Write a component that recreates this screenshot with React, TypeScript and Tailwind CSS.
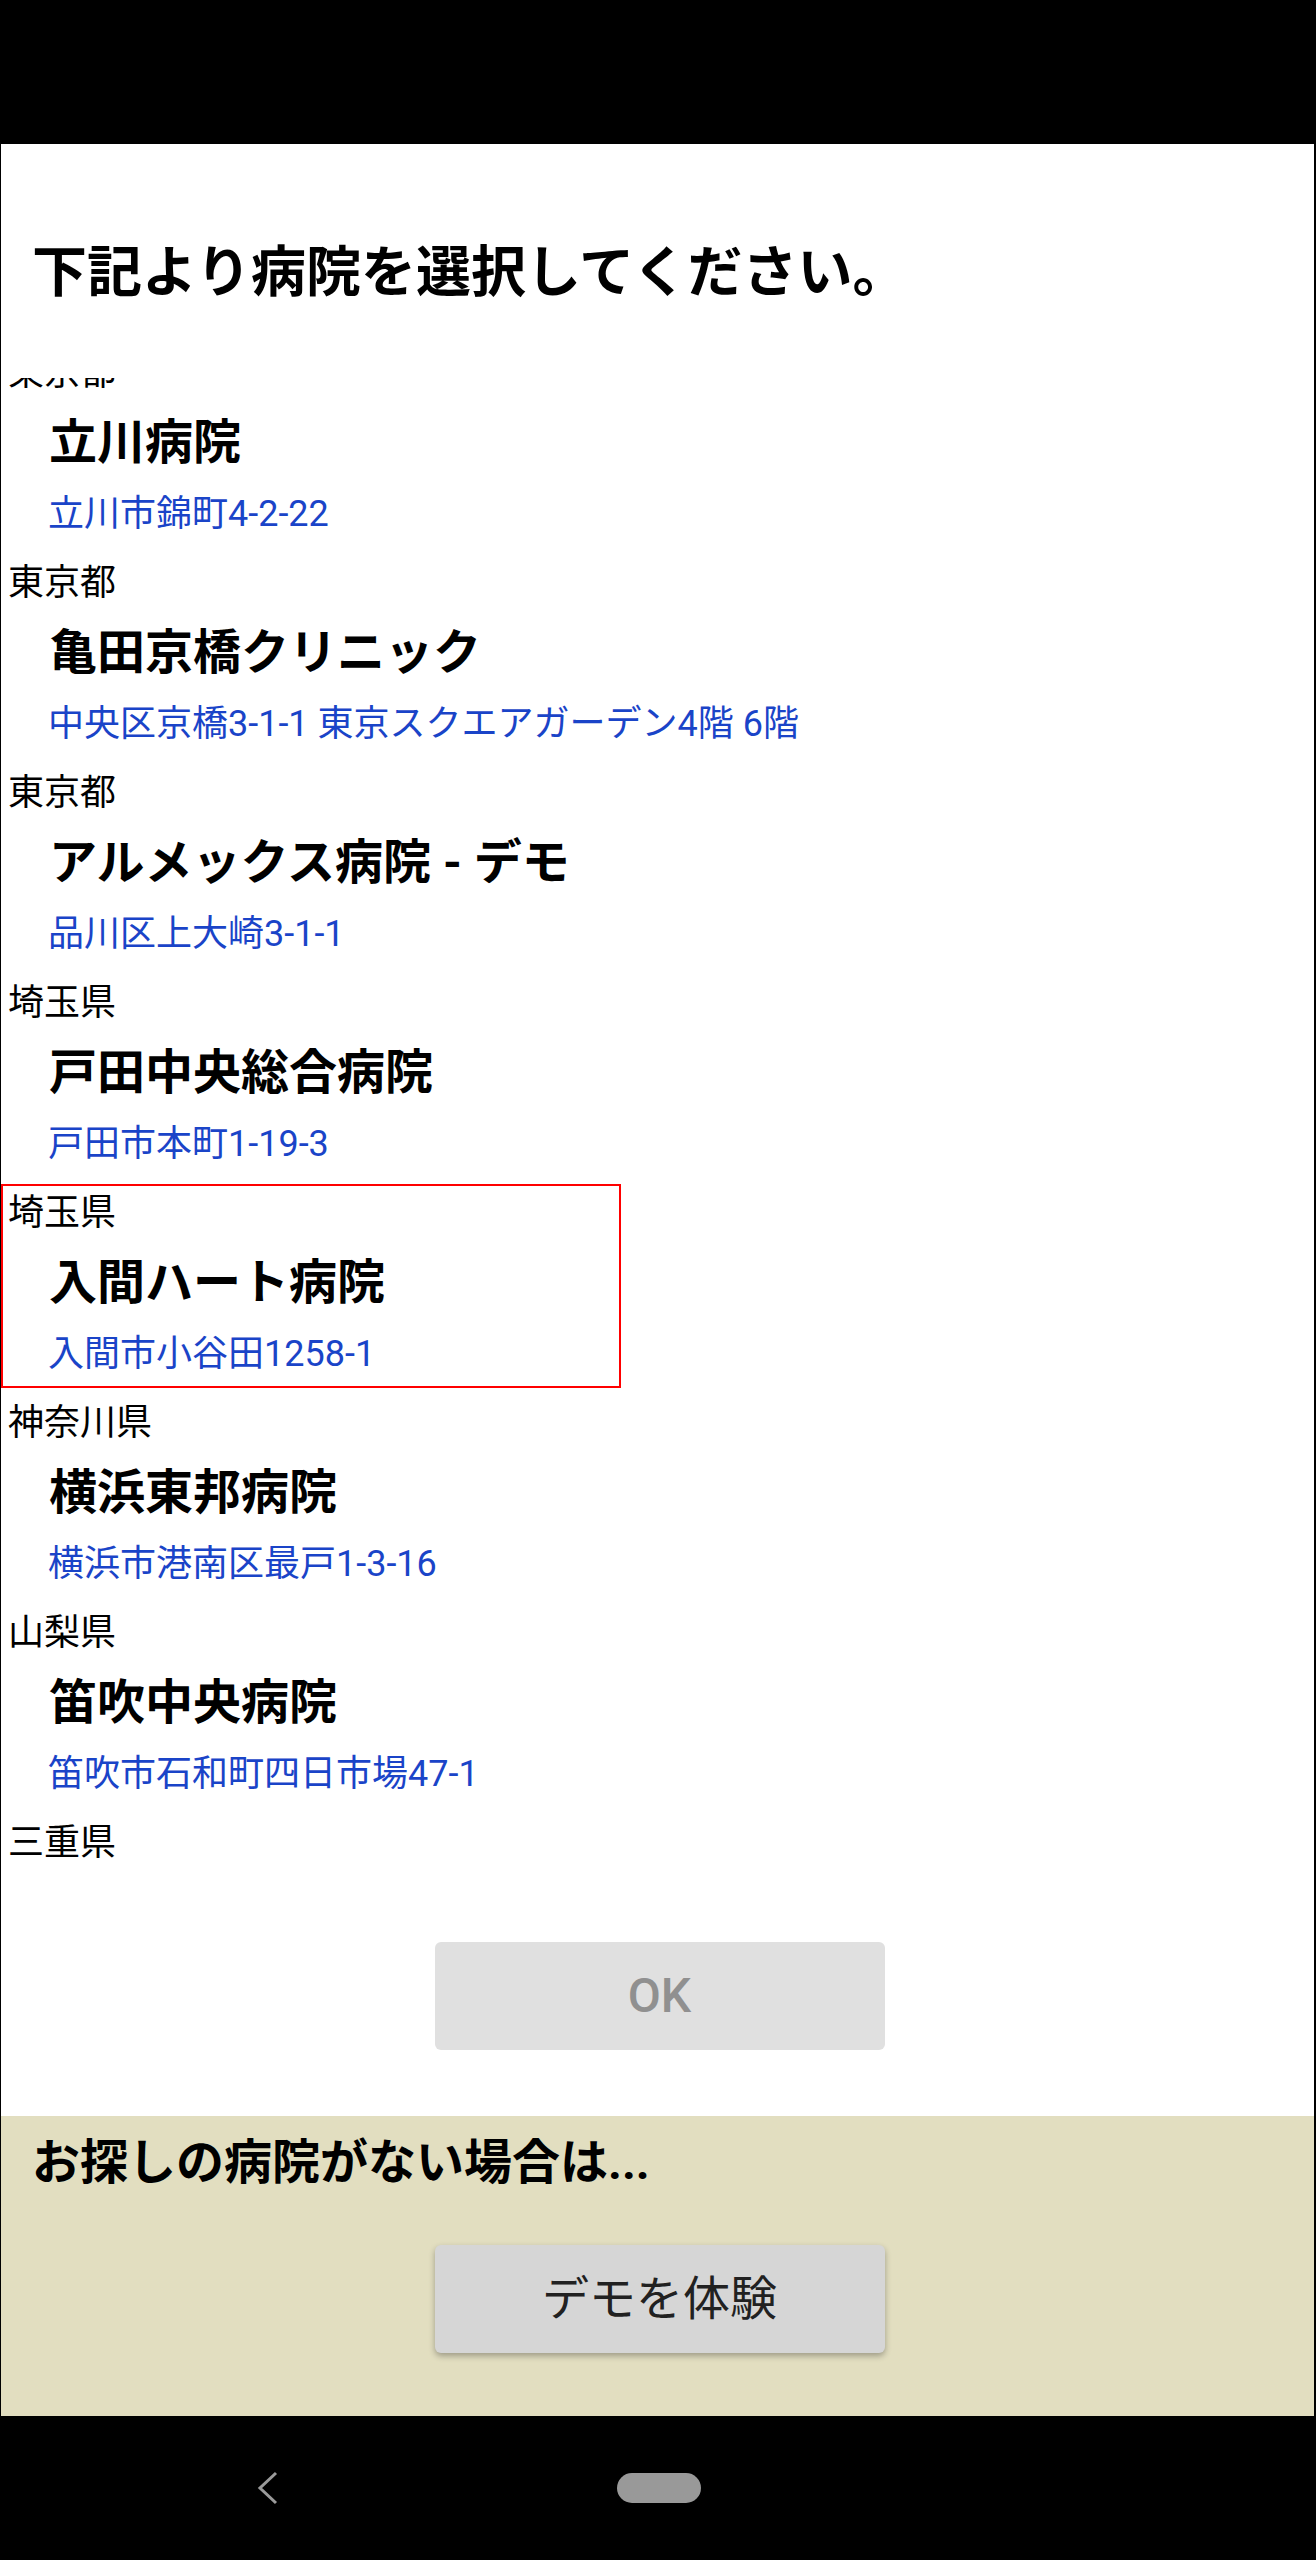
import React from 'react';

type Hospital = {
  pref: string;
  name: string;
  address: string;
  selected?: boolean;
};

const HOSPITALS: Hospital[] = [
  { pref: '東京都', name: '立川病院', address: '立川市錦町4-2-22' },
  { pref: '東京都', name: '亀田京橋クリニック', address: '中央区京橋3-1-1 東京スクエアガーデン4階 6階' },
  { pref: '東京都', name: 'アルメックス病院 - デモ', address: '品川区上大崎3-1-1' },
  { pref: '埼玉県', name: '戸田中央総合病院', address: '戸田市本町1-19-3' },
  { pref: '埼玉県', name: '入間ハート病院', address: '入間市小谷田1258-1', selected: true },
  { pref: '神奈川県', name: '横浜東邦病院', address: '横浜市港南区最戸1-3-16' },
  { pref: '山梨県', name: '笛吹中央病院', address: '笛吹市石和町四日市場47-1' },
  { pref: '三重県', name: '', address: '' },
];

const FONT = { fontFamily: 'Roboto, "Noto Sans CJK JP", sans-serif' };

function HospitalRow({ item }: { item: Hospital }) {
  return (
    <div className="relative h-[210px]">
      <div className="h-[54px] pl-[7px] pt-[5px] text-[36px] leading-[49px] text-black">{item.pref}</div>
      {item.name && (
        <div className="mt-[18px] pl-[48px] text-[48px] font-bold leading-[54px] text-black">{item.name}</div>
      )}
      {item.address && (
        <div className="mt-[22px] pl-[47px] text-[36px] leading-[44px] text-[#1a44c8]">{item.address}</div>
      )}
      {item.selected && (
        <div className="pointer-events-none absolute left-0 top-0 h-[204px] w-[620px] border-[2.5px] border-[#ff0000]" />
      )}
    </div>
  );
}

export default function App() {
  return (
    <div className="flex w-[1316px] flex-col bg-black" style={FONT}>
      {/* status bar */}
      <div className="h-[144px] bg-black" />

      <div className="flex flex-col border-l border-r-2 border-black bg-white">
        <div className="h-[234px] pl-[31px] pt-[98px]">
          <h1 className="text-[55px] font-bold leading-[60px] text-black">下記より病院を選択してください。</h1>
        </div>

        {/* hospital list (scrolled) */}
        <div className="h-[1512px] overflow-hidden">
          <div className="-mt-[34px]">
            {HOSPITALS.map((h, i) => (
              <HospitalRow key={i} item={h} />
            ))}
          </div>
        </div>

        <div className="flex justify-center pb-[66px] pl-[4px] pt-[52px]">
          <button
            type="button"
            disabled
            className="flex h-[108px] w-[450px] items-center justify-center rounded-[6px] bg-[#e0e0e0] text-[48px] font-medium text-[#909090]"
          >
            OK
          </button>
        </div>

        <div className="h-[300px] bg-[#e2dec0]">
          <p className="pl-[31px] pt-[17px] text-[48px] font-bold leading-[60px] text-black">お探しの病院がない場合は...</p>
          <div className="mt-[52px] flex justify-center pl-[4px]">
            <button
              type="button"
              className="flex h-[108px] w-[450px] items-center justify-center rounded-[6px] bg-[#d6d6d6] text-[47px] text-[#212121] shadow-[0_3px_6px_rgba(0,0,0,0.3)]"
            >
              デモを体験
            </button>
          </div>
        </div>
      </div>

      {/* navigation bar */}
      <div className="flex h-[144px] items-center bg-black pl-[256px]">
        <svg width="24" height="34" viewBox="0 0 24 34" className="shrink-0">
          <polyline points="20,2 4,17 20,32" fill="none" stroke="#9a9a9a" strokeWidth="3" />
        </svg>
        <div className="ml-[337px] h-[30px] w-[84px] rounded-full bg-[#999999]" />
      </div>
    </div>
  );
}
